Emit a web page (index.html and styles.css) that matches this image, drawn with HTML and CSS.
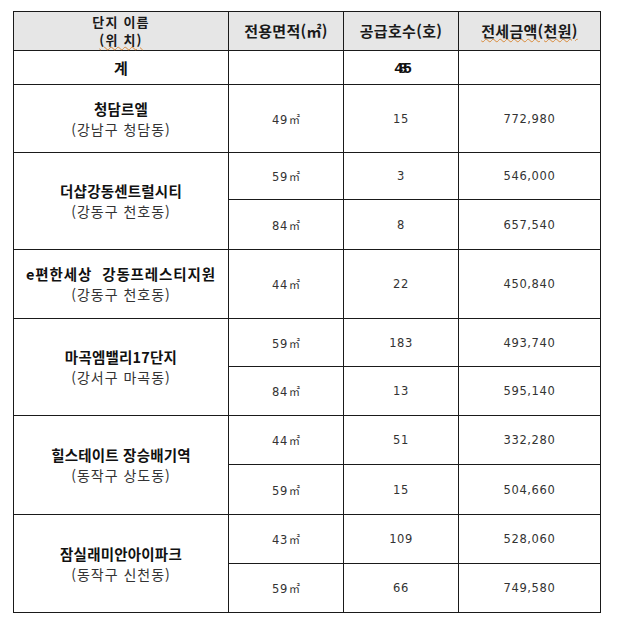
FILE: index.html
```html
<!DOCTYPE html>
<html lang="ko">
<head>
<meta charset="utf-8">
<link rel="stylesheet" href="styles.css">
</head>
<body>
<table class="grid">
  <colgroup>
    <col class="c1"><col class="c2"><col class="c3"><col class="c4">
  </colgroup>
  <thead>
    <tr class="h39">
      <th><div class="two">단지 이름</div><div class="two"><span class="spell">(위 치)</span></div></th>
      <th>전용면적(㎡)</th>
      <th>공급호수(호)</th>
      <th><span class="spell">전세금액(천원)</span></th>
    </tr>
  </thead>
  <tbody>
    <tr class="h34">
      <td class="total">계</td>
      <td></td>
      <td class="total sum">485</td>
      <td></td>
    </tr>
    <tr class="h68">
      <td class="name"><div class="nm">청담르엘</div><div class="addr">(강남구 청담동)</div></td>
      <td class="num">49<span class="sq">㎡</span></td>
      <td class="num">15</td>
      <td class="num">772,980</td>
    </tr>
    <tr class="h47">
      <td class="name" rowspan="2"><div class="nm">더샵강동센트럴시티</div><div class="addr">(강동구 천호동)</div></td>
      <td class="num">59<span class="sq">㎡</span></td>
      <td class="num">3</td>
      <td class="num">546,000</td>
    </tr>
    <tr class="h50">
      <td class="num">84<span class="sq">㎡</span></td>
      <td class="num">8</td>
      <td class="num">657,540</td>
    </tr>
    <tr class="h69">
      <td class="name"><div class="nm wide">e편한세상&nbsp; 강동프레스티지원</div><div class="addr">(강동구 천호동)</div></td>
      <td class="num">44<span class="sq">㎡</span></td>
      <td class="num">22</td>
      <td class="num">450,840</td>
    </tr>
    <tr class="h48">
      <td class="name" rowspan="2"><div class="nm">마곡엠밸리17단지</div><div class="addr">(강서구 마곡동)</div></td>
      <td class="num">59<span class="sq">㎡</span></td>
      <td class="num">183</td>
      <td class="num">493,740</td>
    </tr>
    <tr class="h49">
      <td class="num">84<span class="sq">㎡</span></td>
      <td class="num">13</td>
      <td class="num">595,140</td>
    </tr>
    <tr class="h49">
      <td class="name" rowspan="2"><div class="nm">힐스테이트 장승배기역</div><div class="addr">(동작구 상도동)</div></td>
      <td class="num">44<span class="sq">㎡</span></td>
      <td class="num">51</td>
      <td class="num">332,280</td>
    </tr>
    <tr class="h50">
      <td class="num">59<span class="sq">㎡</span></td>
      <td class="num">15</td>
      <td class="num">504,660</td>
    </tr>
    <tr class="h49">
      <td class="name" rowspan="2"><div class="nm">잠실래미안아이파크</div><div class="addr">(동작구 신천동)</div></td>
      <td class="num">43<span class="sq">㎡</span></td>
      <td class="num">109</td>
      <td class="num">528,060</td>
    </tr>
    <tr class="h49">
      <td class="num">59<span class="sq">㎡</span></td>
      <td class="num">66</td>
      <td class="num">749,580</td>
    </tr>
  </tbody>
</table>
</body>
</html>
```

FILE: styles.css
```css
html, body {
  margin: 0;
  padding: 0;
  background: #ffffff;
}

body {
  padding: 11px 0 0 13px;
  font-family: "Noto Sans CJK KR", "Noto Sans", sans-serif;
  color: #111;
}

.grid {
  border-collapse: collapse;
  table-layout: fixed;
  width: 587px;
  border: 1px solid #3a3a3a;
}

.c1 { width: 215px; }
.c2 { width: 115px; }
.c3 { width: 115px; }
.c4 { width: 142px; }

.grid th,
.grid td {
  border: 1px solid #1a1a1a;
  padding: 0;
  text-align: center;
  vertical-align: middle;
}

.grid th {
  background: #e6e6e6;
  font-size: 15px;
  font-weight: 700;
  color: #1a1a1a;
  line-height: 18px;
  letter-spacing: 0.3px;
}

.two {
  line-height: 18.5px;
  font-size: 13px;
  letter-spacing: 1.2px;
}

.spell {
  text-decoration: underline wavy #d98a3a;
  text-decoration-thickness: 1px;
  text-underline-offset: 1px;
}

.h39 { height: 39px; }
.h34 { height: 34px; }
.h68 { height: 68px; }
.h47 { height: 47px; }
.h48 { height: 48px; }
.h49 { height: 49px; }
.h50 { height: 50px; }
.h69 { height: 69px; }

.total {
  font-size: 15px;
  font-weight: 700;
  color: #111;
}

.sum {
  letter-spacing: -4px;
  padding-right: 4px;
  font-family: "Liberation Sans", sans-serif;
  font-size: 15px;
}

.name {
  line-height: 21px;
}

.nm {
  font-size: 14.5px;
  font-weight: 700;
  color: #111;
  letter-spacing: 0.2px;
}

.wide {
  letter-spacing: 0.9px;
}

.addr {
  font-size: 14px;
  font-weight: 400;
  color: #333;
  letter-spacing: 1px;
}

.num {
  font-family: "DejaVu Sans", "Liberation Sans", sans-serif;
  font-size: 11.5px;
  color: #333;
  letter-spacing: 0.6px;
}

.sq {
  font-family: "Noto Sans CJK KR", sans-serif;
  font-size: 11px;
  letter-spacing: 0;
  margin-left: 1px;
}
```
